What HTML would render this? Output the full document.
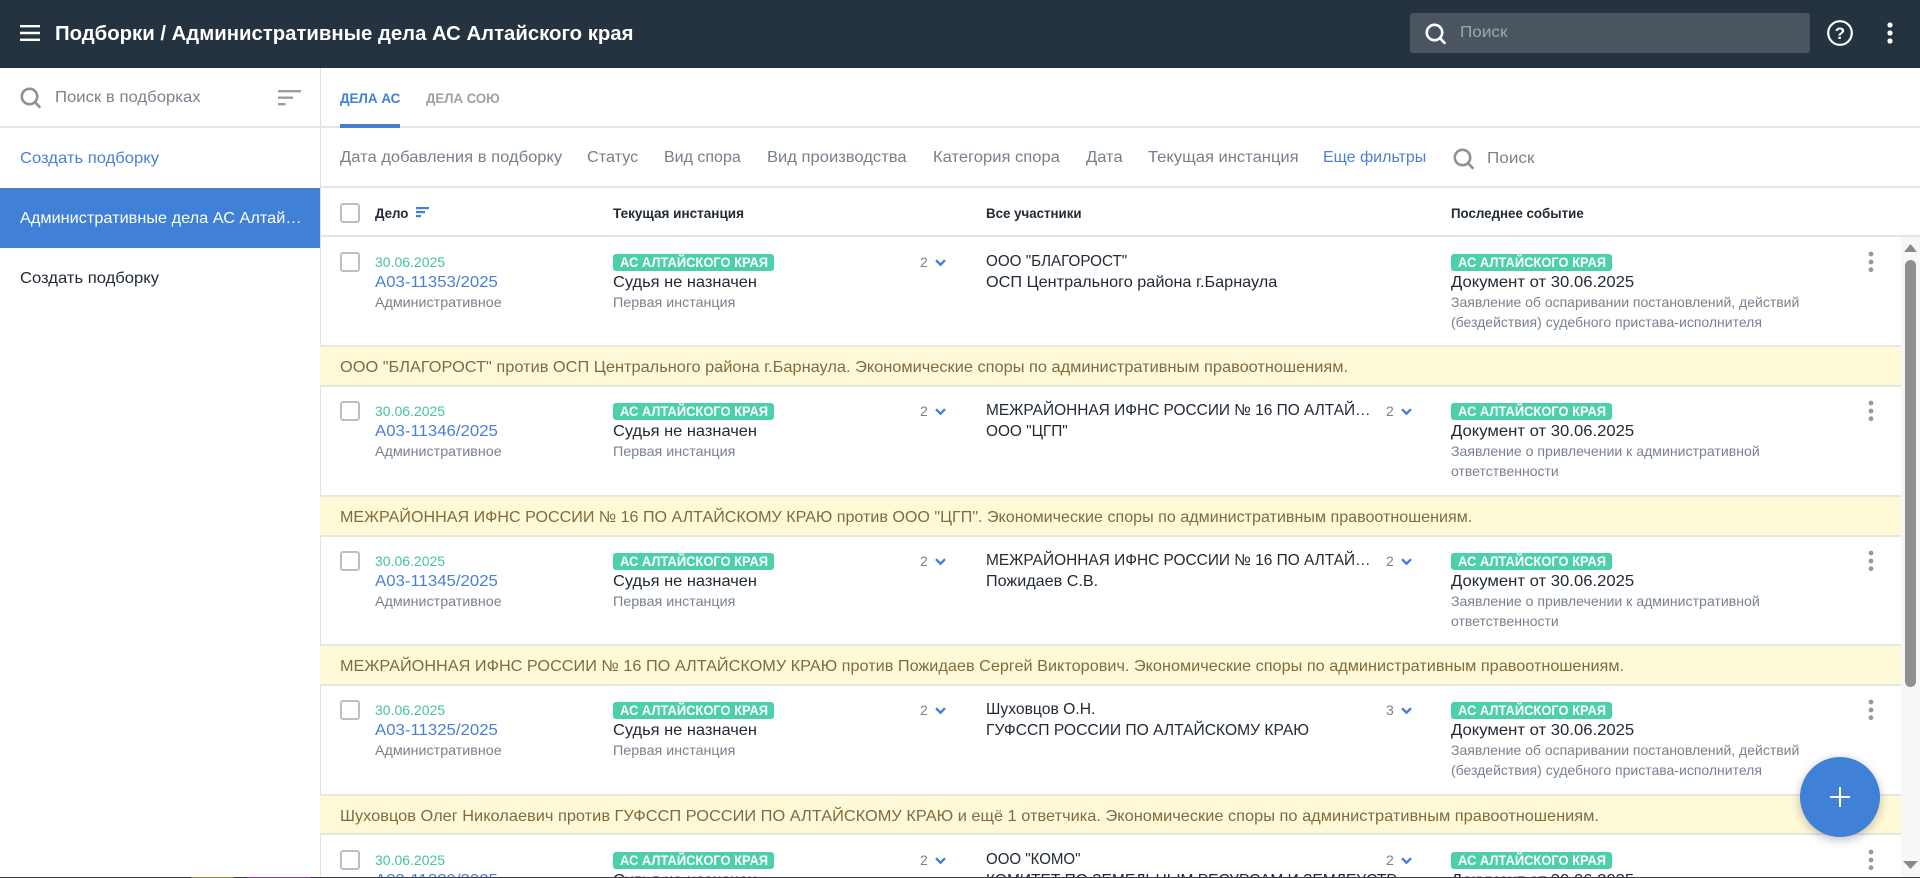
<!DOCTYPE html>
<html lang="ru"><head><meta charset="utf-8"><title>Подборки</title>
<style>
*{box-sizing:border-box}
html,body{margin:0;padding:0;width:1920px;height:878px;overflow:hidden;background:#fff}
body{position:relative;font-family:"Liberation Sans","Noto Sans CJK JP",sans-serif;font-size:16px;color:#222b35}
.a{position:absolute;white-space:nowrap;line-height:20px;transform-origin:0 50%;transform:scaleX(1.035)}
svg{position:absolute;display:block}
.top{position:absolute;left:0;top:0;width:1920px;height:68px;background:#25323f}
.title{left:55px;top:21px;font-size:20px;line-height:26px;font-weight:700;color:#fff;transform:scaleX(1.016)}
.sb{position:absolute;left:1410px;top:13px;width:400px;height:40px;background:#4a5560;border-radius:3px}
.side{position:absolute;left:0;top:68px;width:321px;height:810px;border-right:1px solid #e0e1e3}
.hl{position:absolute;height:2px;background:#e4e5e7}
.g{color:#7a848e}
.sel{position:absolute;left:0;top:188px;width:320px;height:60px;background:#4080d6}
.f{top:148px;color:#76808b}
.h{top:203px;font-size:14px;font-weight:700;color:#222b35;transform:scaleX(.95)}
.cb{position:absolute;width:20px;height:20px;border:2.5px solid #bcc0c6;border-radius:3px;background:#fff}
.row{position:absolute;left:320px;width:1581px;height:108px}
.row .cb{left:20px;top:15px}
.d{left:55px;top:15px;font-size:14px;color:#45c3a0;transform:scaleX(1)}
.n{left:55px;top:36px;color:#4a7fd6;transform:scaleX(1.049)}
.t{left:55px;top:55px;font-size:14px;color:#78828e;transform:scaleX(1.02)}
.b{position:absolute;top:17px;height:17px;width:161px;border-radius:3px;background:#4bd0ab}
.b span{position:absolute;left:7px;top:0;line-height:17px;font-size:14px;font-weight:700;color:#fff;white-space:nowrap;transform-origin:0 50%;transform:scaleX(.922)}
.j{left:293px;top:36px;color:#222b35;transform:scaleX(1.026)}
.c{top:15px;font-size:14px;color:#78828e;transform:none}
.p{left:666px;color:#222b35;transform:scaleX(.975)}
.e{left:1131px;color:#222b35;top:36px;transform:scaleX(1.042)}
.s{left:1131px;font-size:14px;color:#78828e;transform:scaleX(1)}
.band{position:absolute;left:320px;width:1581px;height:42px;background:#fefad8;border-top:2px solid #e8e8e0;border-bottom:2px solid #e6e6e2}
.band div{left:20px;top:11px;color:#7f6c3e}
.scr{position:absolute;left:1901px;top:237px;width:19px;height:641px;background:#f7f7f7}
.fab{position:absolute;left:1800px;top:757px;width:80px;height:80px;border-radius:50%;background:#4080d6;box-shadow:0 3px 10px rgba(0,0,0,.25)}
.tb{position:absolute;left:0;top:877px;width:1920px;height:1px;background:#3d3a48}
</style></head><body>

<div class="side"></div>
<div class="sel"></div>

<div class="hl" style="left:0;top:126px;width:1920px"></div>
<div class="hl" style="left:321px;top:186px;width:1599px"></div>
<div class="hl" style="left:321px;top:235px;width:1599px"></div>

<div class="top"></div>
<svg style="left:20px;top:25px" width="20" height="16"><path d="M0 1.2h20M0 8h20M0 14.8h20" stroke="#fff" stroke-width="2.4"/></svg>
<div class="a title">Подборки / Административные дела АС Алтайского края</div>
<div class="sb"></div>
<svg style="left:1425px;top:23px" width="22" height="22" fill="none" stroke="#fff" stroke-width="2.6"><circle cx="9.5" cy="9.5" r="7.7"/><path d="M14.8 15l5.5 5.7"/></svg>
<div class="a" style="left:1460px;top:23px;color:#a0a6ac;transform:scaleX(1.07)">Поиск</div>
<svg style="left:1826px;top:20px" width="28" height="26" fill="none"><circle cx="14" cy="13" r="11.8" stroke="#fff" stroke-width="2.2"/><text x="14" y="19" text-anchor="middle" font-size="17" font-weight="700" fill="#fff" font-family="Liberation Sans">?</text></svg>
<svg style="left:1885px;top:21px" width="10" height="24" fill="#fff"><circle cx="5" cy="4" r="2.6"/><circle cx="5" cy="12" r="2.6"/><circle cx="5" cy="20" r="2.6"/></svg>

<svg style="left:20px;top:87px" width="22" height="22" fill="none" stroke="#8d9297" stroke-width="2.6"><circle cx="9.5" cy="9.5" r="7.7"/><path d="M14.8 15l5.5 5.7"/></svg>
<div class="a g" style="left:55px;top:88px;transform:scaleX(1.044)">Поиск в подборках</div>
<svg style="left:278px;top:90px" width="24" height="16" fill="#9a9ea3"><rect x="0" y="0" width="23" height="2.4"/><rect x="0" y="6.5" width="15" height="2.4"/><rect x="0" y="13" width="7.5" height="2.4"/></svg>

<div class="a" style="left:340px;top:88px;font-size:14px;font-weight:700;color:#4080d6;transform:scaleX(.958)">ДЕЛА АС</div>
<div style="position:absolute;left:340px;top:124px;width:60px;height:4px;background:#4080d6"></div>
<div class="a" style="left:426px;top:88px;font-size:14px;font-weight:700;color:#9ea2a6;transform:scaleX(.943)">ДЕЛА СОЮ</div>

<div class="a" style="left:20px;top:149px;color:#4a80d8;transform:scaleX(1.038)">Создать подборку</div>
<div class="a" style="left:20px;top:209px;color:#fff;transform:scaleX(1.018)">Административные дела АС Алтай…</div>
<div class="a" style="left:20px;top:269px;color:#222b35;transform:scaleX(1.038)">Создать подборку</div>

<div class="a f" style="left:340px">Дата добавления в подборку</div>
<div class="a f" style="left:587px;transform:scaleX(1.013)">Статус</div>
<div class="a f" style="left:664px;transform:scaleX(1)">Вид спора</div>
<div class="a f" style="left:767px">Вид производства</div>
<div class="a f" style="left:933px">Категория спора</div>
<div class="a f" style="left:1086px">Дата</div>
<div class="a f" style="left:1148px">Текущая инстанция</div>
<div class="a f" style="left:1323px;color:#4a80d8;transform:scaleX(1)">Еще фильтры</div>
<svg style="left:1453px;top:148px" width="22" height="22" fill="none" stroke="#8d9297" stroke-width="2.6"><circle cx="9.5" cy="9.5" r="7.7"/><path d="M14.8 15l5.5 5.7"/></svg>
<div class="a g" style="left:1487px;top:149px;transform:scaleX(1.07)">Поиск</div>

<div class="cb" style="left:340px;top:203px"></div>
<div class="a h" style="left:375px">Дело</div>
<svg style="left:416px;top:207px" width="14" height="11" fill="#4080d6"><rect width="13" height="2.2"/><rect y="4" width="9" height="2.2"/><rect y="8" width="5" height="2.2"/></svg>
<div class="a h" style="left:613px;transform:scaleX(.966)">Текущая инстанция</div>
<div class="a h" style="left:986px">Все участники</div>
<div class="a h" style="left:1451px">Последнее событие</div>

<!-- ROW 1 -->
<div class="row" style="top:237px">
<div class="cb"></div><div class="a d">30.06.2025</div><div class="a n">А03-11353/2025</div><div class="a t">Административное</div>
<div class="b" style="left:293px"><span>АС АЛТАЙСКОГО КРАЯ</span></div><div class="a j">Судья не назначен</div><div class="a t" style="left:293px">Первая инстанция</div>
<div class="a c" style="left:600px">2</div><svg style="left:615px;top:22px" width="11" height="8" fill="none" stroke="#4080d6" stroke-width="2.4"><path d="M1 1.2l4.5 4.5 4.5-4.5"/></svg>
<div class="a p" style="top:15px;transform:scaleX(.95)">ООО "БЛАГОРОСТ"</div><div class="a p" style="top:36px;transform:scaleX(1.016)">ОСП Центрального района г.Барнаула</div>
<div class="b" style="left:1131px"><span>АС АЛТАЙСКОГО КРАЯ</span></div><div class="a e">Документ от 30.06.2025</div>
<div class="a s" style="top:55px">Заявление об оспаривании постановлений, действий</div><div class="a s" style="top:75px">(бездействия) судебного пристава-исполнителя</div>
<svg style="left:1547px;top:14px" width="8" height="22" fill="#999"><circle cx="4" cy="3" r="2.4"/><circle cx="4" cy="11" r="2.4"/><circle cx="4" cy="18.7" r="2.4"/></svg>
</div>
<div class="band" style="top:345px"><div class="a" style="transform:scaleX(1.022)">ООО "БЛАГОРОСТ" против ОСП Центрального района г.Барнаула. Экономические споры по административным правоотношениям.</div></div>

<!-- ROW 2 -->
<div class="row" style="top:386px">
<div class="cb"></div><div class="a d">30.06.2025</div><div class="a n">А03-11346/2025</div><div class="a t">Административное</div>
<div class="b" style="left:293px"><span>АС АЛТАЙСКОГО КРАЯ</span></div><div class="a j">Судья не назначен</div><div class="a t" style="left:293px">Первая инстанция</div>
<div class="a c" style="left:600px">2</div><svg style="left:615px;top:22px" width="11" height="8" fill="none" stroke="#4080d6" stroke-width="2.4"><path d="M1 1.2l4.5 4.5 4.5-4.5"/></svg>
<div class="a p" style="top:15px;transform:scaleX(.965)">МЕЖРАЙОННАЯ ИФНС РОССИИ № 16 ПО АЛТАЙ…</div><div class="a p" style="top:36px;transform:scaleX(.96)">ООО "ЦГП"</div>
<div class="a c" style="left:1066px">2</div><svg style="left:1081px;top:22px" width="11" height="8" fill="none" stroke="#4080d6" stroke-width="2.4"><path d="M1 1.2l4.5 4.5 4.5-4.5"/></svg>
<div class="b" style="left:1131px"><span>АС АЛТАЙСКОГО КРАЯ</span></div><div class="a e">Документ от 30.06.2025</div>
<div class="a s" style="top:55px;transform:scaleX(1.007)">Заявление о привлечении к административной</div><div class="a s" style="top:75px">ответственности</div>
<svg style="left:1547px;top:14px" width="8" height="22" fill="#999"><circle cx="4" cy="3" r="2.4"/><circle cx="4" cy="11" r="2.4"/><circle cx="4" cy="18.7" r="2.4"/></svg>
</div>
<div class="band" style="top:495px"><div class="a" style="transform:scaleX(1.006)">МЕЖРАЙОННАЯ ИФНС РОССИИ № 16 ПО АЛТАЙСКОМУ КРАЮ против ООО "ЦГП". Экономические споры по административным правоотношениям.</div></div>

<!-- ROW 3 -->
<div class="row" style="top:536px">
<div class="cb"></div><div class="a d">30.06.2025</div><div class="a n">А03-11345/2025</div><div class="a t">Административное</div>
<div class="b" style="left:293px"><span>АС АЛТАЙСКОГО КРАЯ</span></div><div class="a j">Судья не назначен</div><div class="a t" style="left:293px">Первая инстанция</div>
<div class="a c" style="left:600px">2</div><svg style="left:615px;top:22px" width="11" height="8" fill="none" stroke="#4080d6" stroke-width="2.4"><path d="M1 1.2l4.5 4.5 4.5-4.5"/></svg>
<div class="a p" style="top:15px;transform:scaleX(.965)">МЕЖРАЙОННАЯ ИФНС РОССИИ № 16 ПО АЛТАЙ…</div><div class="a p" style="top:36px;transform:scaleX(1.01)">Пожидаев С.В.</div>
<div class="a c" style="left:1066px">2</div><svg style="left:1081px;top:22px" width="11" height="8" fill="none" stroke="#4080d6" stroke-width="2.4"><path d="M1 1.2l4.5 4.5 4.5-4.5"/></svg>
<div class="b" style="left:1131px"><span>АС АЛТАЙСКОГО КРАЯ</span></div><div class="a e">Документ от 30.06.2025</div>
<div class="a s" style="top:55px;transform:scaleX(1.007)">Заявление о привлечении к административной</div><div class="a s" style="top:75px">ответственности</div>
<svg style="left:1547px;top:14px" width="8" height="22" fill="#999"><circle cx="4" cy="3" r="2.4"/><circle cx="4" cy="11" r="2.4"/><circle cx="4" cy="18.7" r="2.4"/></svg>
</div>
<div class="band" style="top:644px"><div class="a" style="transform:scaleX(1.016)">МЕЖРАЙОННАЯ ИФНС РОССИИ № 16 ПО АЛТАЙСКОМУ КРАЮ против Пожидаев Сергей Викторович. Экономические споры по административным правоотношениям.</div></div>

<!-- ROW 4 -->
<div class="row" style="top:685px">
<div class="cb"></div><div class="a d">30.06.2025</div><div class="a n">А03-11325/2025</div><div class="a t">Административное</div>
<div class="b" style="left:293px"><span>АС АЛТАЙСКОГО КРАЯ</span></div><div class="a j">Судья не назначен</div><div class="a t" style="left:293px">Первая инстанция</div>
<div class="a c" style="left:600px">2</div><svg style="left:615px;top:22px" width="11" height="8" fill="none" stroke="#4080d6" stroke-width="2.4"><path d="M1 1.2l4.5 4.5 4.5-4.5"/></svg>
<div class="a p" style="top:15px;transform:scaleX(.98)">Шуховцов О.Н.</div><div class="a p" style="top:36px;transform:scaleX(.976)">ГУФССП РОССИИ ПО АЛТАЙСКОМУ КРАЮ</div>
<div class="a c" style="left:1066px">3</div><svg style="left:1081px;top:22px" width="11" height="8" fill="none" stroke="#4080d6" stroke-width="2.4"><path d="M1 1.2l4.5 4.5 4.5-4.5"/></svg>
<div class="b" style="left:1131px"><span>АС АЛТАЙСКОГО КРАЯ</span></div><div class="a e">Документ от 30.06.2025</div>
<div class="a s" style="top:55px">Заявление об оспаривании постановлений, действий</div><div class="a s" style="top:75px">(бездействия) судебного пристава-исполнителя</div>
<svg style="left:1547px;top:14px" width="8" height="22" fill="#999"><circle cx="4" cy="3" r="2.4"/><circle cx="4" cy="11" r="2.4"/><circle cx="4" cy="18.7" r="2.4"/></svg>
</div>
<div class="band" style="top:794px;height:41px"><div class="a" style="transform:scaleX(1.023)">Шуховцов Олег Николаевич против ГУФССП РОССИИ ПО АЛТАЙСКОМУ КРАЮ и ещё 1 ответчика. Экономические споры по административным правоотношениям.</div></div>

<!-- ROW 5 -->
<div class="row" style="top:835px;height:43px;overflow:hidden">
<div class="cb"></div><div class="a d">30.06.2025</div><div class="a n">А03-11329/2025</div>
<div class="b" style="left:293px"><span>АС АЛТАЙСКОГО КРАЯ</span></div><div class="a j">Судья не назначен</div>
<div class="a c" style="left:600px">2</div><svg style="left:615px;top:22px" width="11" height="8" fill="none" stroke="#4080d6" stroke-width="2.4"><path d="M1 1.2l4.5 4.5 4.5-4.5"/></svg>
<div class="a p" style="top:15px;transform:scaleX(.94)">ООО "КОМО"</div><div class="a p" style="top:36px;transform:scaleX(.97)">КОМИТЕТ ПО ЗЕМЕЛЬНЫМ РЕСУРСАМ И ЗЕМЛЕУСТР…</div>
<div class="a c" style="left:1066px">2</div><svg style="left:1081px;top:22px" width="11" height="8" fill="none" stroke="#4080d6" stroke-width="2.4"><path d="M1 1.2l4.5 4.5 4.5-4.5"/></svg>
<div class="b" style="left:1131px"><span>АС АЛТАЙСКОГО КРАЯ</span></div><div class="a e">Документ от 30.06.2025</div>
<svg style="left:1547px;top:14px" width="8" height="22" fill="#999"><circle cx="4" cy="3" r="2.4"/><circle cx="4" cy="11" r="2.4"/><circle cx="4" cy="18.7" r="2.4"/></svg>
</div>

<div class="scr"></div>
<svg style="left:1903px;top:244px" width="15" height="9" fill="#8a8a8a"><path d="M7.5 0L14 8H1z"/></svg>
<div style="position:absolute;left:1905px;top:260px;width:11px;height:427px;border-radius:6px;background:#8f8f8f"></div>
<svg style="left:1903px;top:861px" width="15" height="9" fill="#8a8a8a"><path d="M0 0h15L7.5 8z"/></svg>

<div class="fab"></div>
<svg style="left:1830px;top:787px" width="20" height="20"><path d="M10 0v20M0 10h20" stroke="#fff" stroke-width="2"/></svg>

<div class="tb"></div>
<div style="position:absolute;left:191px;top:877px;width:43px;height:1px;background:#8d7f36"></div>
<div style="position:absolute;left:247px;top:877px;width:63px;height:1px;background:#7a3f9c"></div>
</body></html>
